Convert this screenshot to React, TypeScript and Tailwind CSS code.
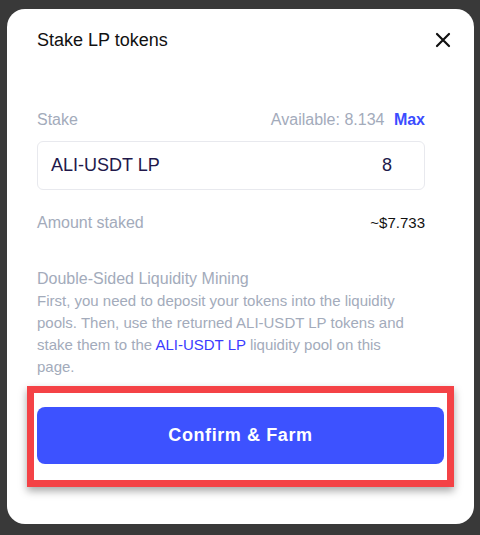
import React from 'react';

const font = { fontFamily: '"Liberation Sans", Arial, sans-serif' };

const App = () => {
  return (
    <div className="w-[480px] h-[535px] bg-[#393939] pt-[9px] pl-[7px] overflow-hidden" style={font}>
      <div className="w-[467px] h-[515px] bg-white rounded-[18px] pl-[30px] pr-[49px] pt-[17px]">
        {/* Header */}
        <div className="flex items-center justify-between h-[28px] mr-[-26px]">
          <h2 className="text-[18px] text-[#111] font-medium">Stake LP tokens</h2>
          <button className="text-[#111]">
            <svg width="16" height="16" viewBox="0 0 16 16" fill="none" stroke="currentColor" strokeWidth="2.2" strokeLinecap="round">
              <path d="M2 2L14 14M14 2L2 14" />
            </svg>
          </button>
        </div>

        {/* Stake */}
        <div className="mt-[55px] flex items-center justify-between h-[22px] text-[16px]">
          <span className="text-[#a3abbb]">Stake</span>
          <span className="text-[#a3abbb]">
            Available: 8.134 <span className="ml-[5px] text-[#3b4dff] font-bold">Max</span>
          </span>
        </div>
        <div className="mt-[10px] h-[49px] border border-[#e8e9ee] rounded-[6px] flex items-center justify-between pl-[13px] pr-[32px]">
          <span className="text-[18px] text-[#21184a]">ALI-USDT LP</span>
          <span className="text-[18px] text-[#21184a]">8</span>
        </div>

        {/* Amount staked */}
        <div className="mt-[22px] flex items-center justify-between h-[22px]">
          <span className="text-[16px] text-[#a3abbb]">Amount staked</span>
          <span className="text-[15px] text-[#111]">~$7.733</span>
        </div>

        {/* Description */}
        <div className="mt-[34px] mr-[-12px] text-[15px] leading-[22px] text-[#a3abbb]">
          <p className="text-[16px]">Double-Sided Liquidity Mining</p>
          <p>
            First, you need to deposit your tokens into the liquidity
            <br />
            pools. Then, use the returned ALI-USDT LP tokens and
            <br />
            stake them to the <span className="text-[#3b3bff]">ALI-USDT LP</span> liquidity pool on this
            <br />
            page.
          </p>
        </div>

        {/* Highlighted action */}
        <div className="mt-[8px] ml-[-10px] w-[427px] border-[7px] border-[#f44246] shadow-[0_4px_8px_rgba(0,0,0,0.35)] pt-[14px] pb-[16px] px-[3px]">
          <button className="w-full h-[57px] rounded-[8px] bg-[#3d52ff] text-white text-[18px] font-bold tracking-[0.6px]">
            Confirm &amp; Farm
          </button>
        </div>
      </div>
    </div>
  );
};

export default App;
